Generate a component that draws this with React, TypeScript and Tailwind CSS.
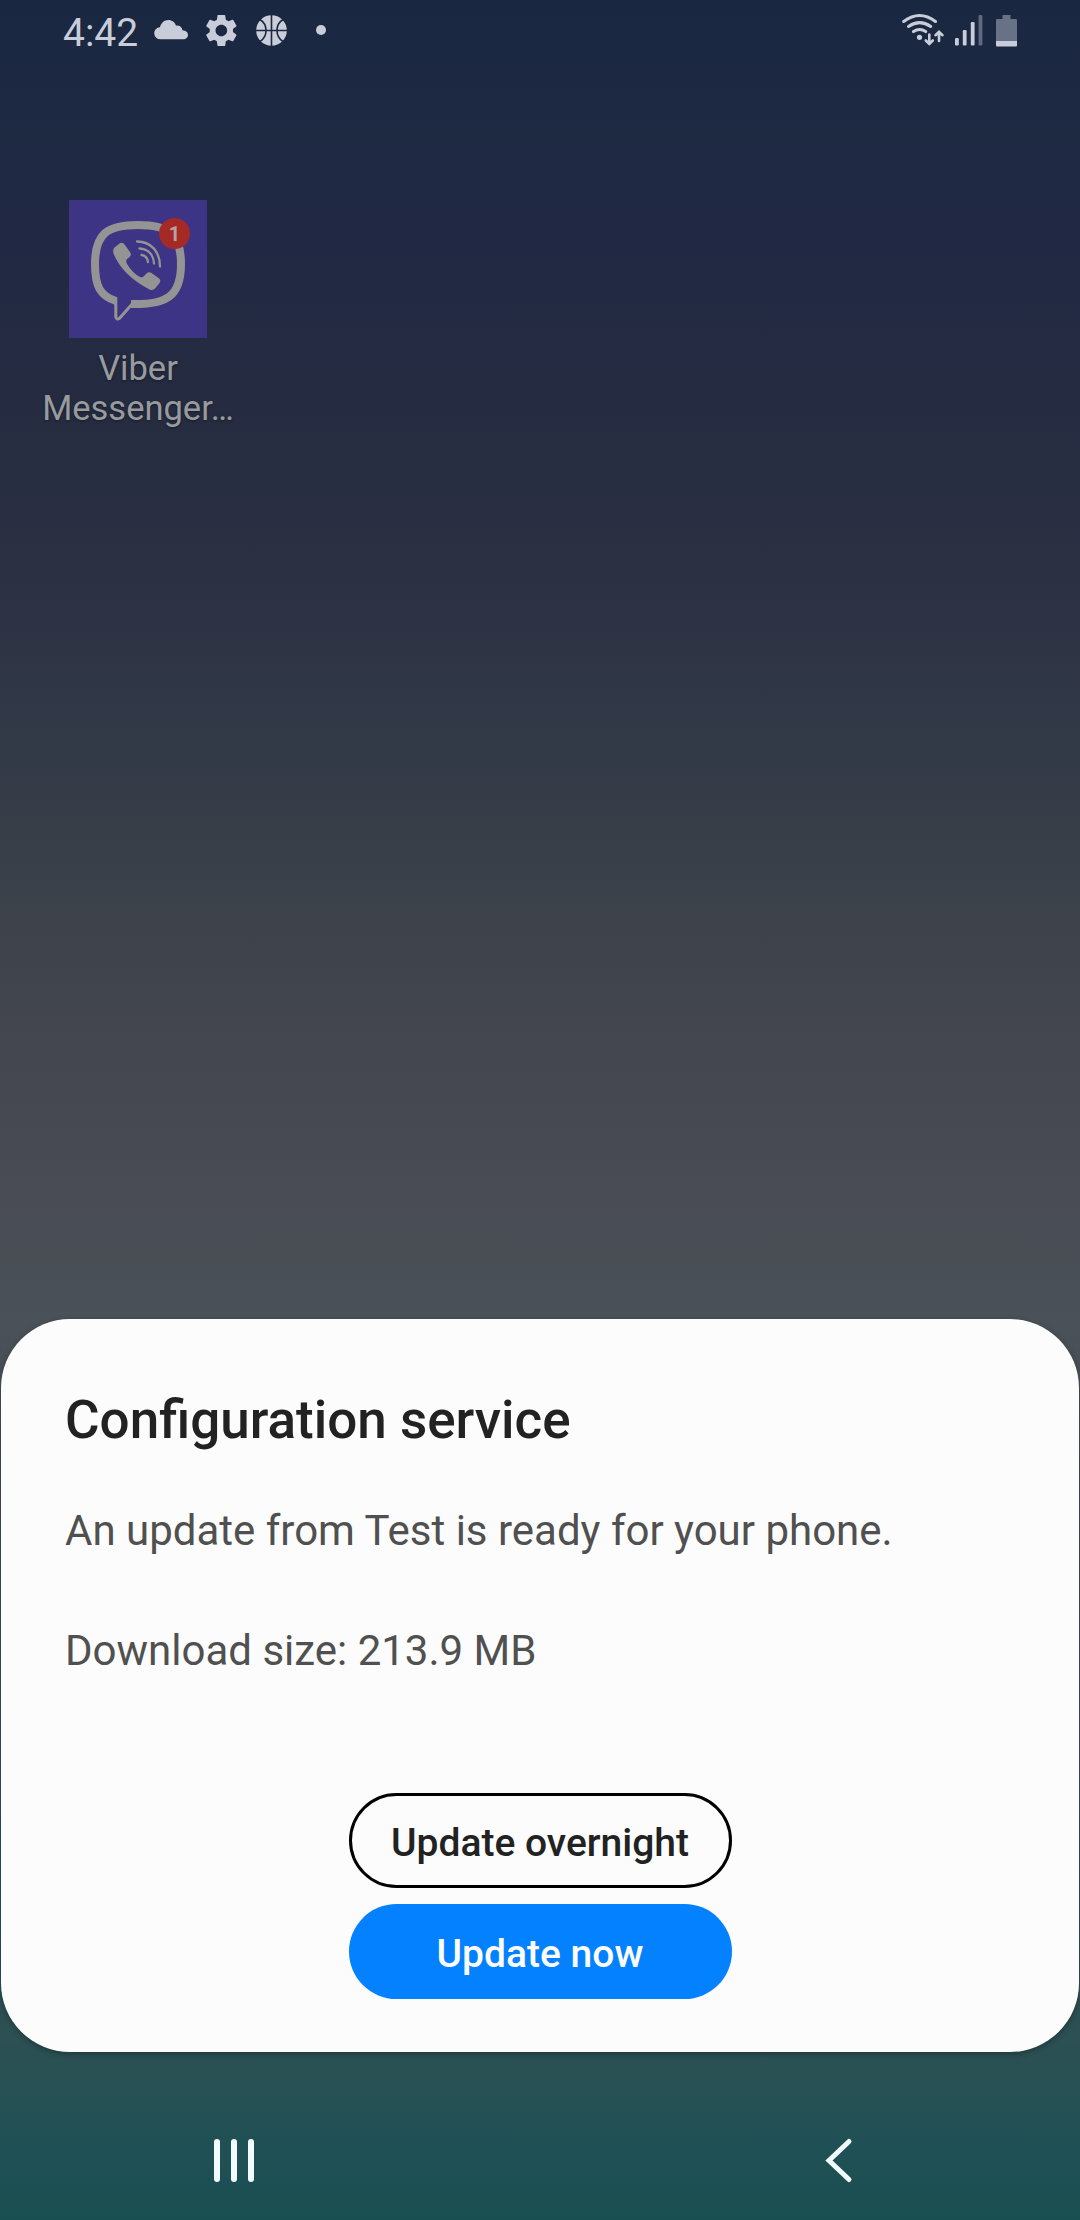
import React from "react";

function StatusBar() {
  return (
    <header className="flex h-16 items-start justify-between text-[#c8cdd9]">
      <div className="flex items-start pl-[63px]">
        <span className="mt-[9px] w-[91px] text-[39px] leading-[48px]">4:42</span>
        <svg className="mt-[20px] h-[20px] w-[34px]" viewBox="0 0 34 20" fill="currentColor">
          <path d="M6.5 19.2a6 6 0 0 1-.6-12C7.2 2.800 10.300 0 14.300 0c3.700 0 6.500 2.200 7.800 5.700 3.100-.5 6 1.300 6.400 4.500 3.100.2 5.500 2 5.500 4.700 0 2.500-2 4.300-4.700 4.300Z" />
        </svg>
        <svg className="mt-[11px] h-[39px] w-[68px]" viewBox="0 0 42 24" fill="currentColor">
          <path transform="translate(8.600 0)" d="M19.14 12.94c.04-.3.06-.61.06-.94 0-.32-.02-.64-.07-.94l2.03-1.58a.49.49 0 0 0 .12-.61l-1.920-3.320a.488.488 0 0 0-.59-.22l-2.390.96c-.5-.38-1.030-.7-1.620-.94l-.36-2.540a.484.484 0 0 0-.48-.41h-3.840c-.24 0-.43.17-.47.41l-.36 2.540c-.59.24-1.130.57-1.620.94l-2.390-.96c-.22-.08-.47 0-.59.22L2.740 8.870c-.12.21-.08.47.12.61l2.030 1.580c-.05.3-.09.63-.09.94s.02.64.07.94l-2.030 1.580a.49.49 0 0 0-.12.61l1.920 3.320c.12.22.37.29.59.22l2.390-.96c.5.38 1.030.7 1.620.94l.36 2.540c.05.24.24.41.48.41h3.840c.24 0 .44-.17.47-.41l.36-2.540c.59-.24 1.130-.56 1.620-.94l2.390.96c.22.08.47 0 .59-.22l1.920-3.320c.12-.22.07-.47-.12-.61l-2.010-1.580zM12 15.600c-1.980 0-3.600-1.620-3.600-3.600s1.620-3.600 3.600-3.600 3.600 1.620 3.600 3.600-1.620 3.600-3.600 3.600z" />
        </svg>
        <svg className="mt-[15px] h-[31px] w-[31px]" viewBox="0 0 31 31">
          <circle cx="15.500" cy="15.500" r="15.300" fill="currentColor" />
          <path d="M15.500 0v31M0 15.500h31M4 4.500c8 5 8 17 0 22M27 4.500c-8 5-8 17 0 22" fill="none" stroke="#1b2840" strokeWidth="1.600" />
        </svg>
        <span className="mt-[25px] ml-[29px] size-[10px] rounded-full bg-current" />
      </div>
      <svg className="mt-[12px] mr-[60px] h-[36px] w-[120px]" viewBox="900 12 120 36">
        <g fill="none" stroke="currentColor" strokeWidth="3" strokeLinecap="round">
          <path d="M903.700 21.500Q919.600 9.500 935.500 21.500M908.500 26.500Q919.600 18.700 930.700 26.500M913.500 31.600Q919.600 27.600 925.700 31.600" />
          <path d="M929.300 34.500v9M925.800 40.500l3.500 3.400 3.500-3.400M939 41v-8.500M935.500 35.200l3.500-3.400 3.500 3.400" strokeWidth="2.600" />
        </g>
        <circle cx="919.500" cy="37.300" r="2.600" fill="currentColor" />
        <g fill="currentColor">
          <rect x="955" y="38" width="3.800" height="7.500" rx="1.200" />
          <rect x="962.800" y="30" width="3.800" height="15.500" rx="1.200" />
          <rect x="970.800" y="22" width="3.800" height="23.500" rx="1.200" />
          <rect x="978.600" y="15" width="3.800" height="30.500" rx="1" opacity=".4" />
          <path d="M1002.500 15h8v4h5.500q1 0 1 1v21h-21V20q0-1 1-1h5.500z" opacity=".45" />
          <path d="M996 41h21v4.500q0 1-1 1h-19q-1 0-1-1z" />
        </g>
      </svg>
    </header>
  );
}

function ViberShortcut() {
  return (
    <div className="mt-[136px] ml-[18px] flex w-[240px] flex-col items-center">
      <div className="relative size-[138px] bg-[#3e3485]">
        <svg className="size-full" viewBox="0 0 138 138" fill="none">
          <path d="M69 25C39 25 26 33 26 64c0 22 5 32 21 37M62 104C98 105 112 96 112 64c0-31-13-39-43-39" stroke="#949494" strokeWidth="8" />
          <path d="M46.800 97v20q.8 3.500 4 1L64 103" stroke="#949494" strokeWidth="3" strokeLinejoin="round" />
          <path d="M45.500 47.500l5-4q3-2 5 1l5.500 7.500q2 3-.5 5l-2.500 2q-1.500 2 0 5 5.500 9 13 13 2.500 1 4-1l2.500-2.500q2-2 5-.5l7 5q3 2 1 5l-4 5q-2.500 3-6 1.500Q53 75 44.500 53.500q-1-4 1-6z" fill="#949494" />
          <path d="M68 41.500c14 0 23 10 23 25M70.500 48.500c9 .5 14 6.500 14.500 15M72.500 55c4 .5 6 3 6.500 7" stroke="#949494" strokeWidth="2.300" strokeLinecap="round" />
        </svg>
        <span className="absolute top-[18px] left-[90px] flex size-[31px] items-center justify-center rounded-full bg-[#a52a25] text-[20px] leading-none font-bold text-[#b9a3a2]">1</span>
      </div>
      <p className="mt-[10px] text-center text-[34.500px] leading-[40px] text-[#999a9d] [text-shadow:0_1px_3px_rgba(0,0,0,0.4)]">
        Viber
        <br />
        Messenger…
      </p>
    </div>
  );
}

function UpdateSheet() {
  return (
    <section className="mx-px flex h-[733px] flex-col rounded-[69px] bg-[#fcfcfc] px-[64px] pt-[71px] shadow-[0_2px_6px_rgba(0,0,0,0.3)]">
      <h1 className="text-[53px] leading-[60px] font-medium text-[#222222]">Configuration service</h1>
      <p className="mt-[51px] text-[42px] leading-[60px] text-[#505050]">An update from Test is ready for your phone.</p>
      <p className="mt-[60px] text-[42px] leading-[60px] text-[#505050]">Download size: 213.9 MB</p>
      <div className="mt-[112px] flex flex-col items-center gap-4">
        <button className="h-[95px] w-[383px] rounded-full border-3 border-black pt-[4px] text-[39px] leading-[48px] font-medium text-[#222222]">Update overnight</button>
        <button className="h-[95px] w-[383px] rounded-full bg-[#0381fe] pt-[4px] text-[39px] leading-[48px] font-medium text-[#fcfcfc]">Update now</button>
      </div>
    </section>
  );
}

function NavigationBar() {
  return (
    <nav className="mt-[48px] flex h-[120px] items-center justify-between pr-[180px] pl-[174px]">
      <button className="flex size-[120px] items-center justify-center gap-[11.200px]" aria-label="Recents">
        <span className="h-[43px] w-[6px] rounded-full bg-[#f2fbfd]" />
        <span className="h-[43px] w-[6px] rounded-full bg-[#f2fbfd]" />
        <span className="h-[43px] w-[6px] rounded-full bg-[#f2fbfd]" />
      </button>
      <button className="flex size-[120px] items-center justify-center" aria-label="Back">
        <svg className="size-[60px]" viewBox="810 2130 60 60" fill="none">
          <path d="M849 2141.500L829 2160.500L849 2179.500" stroke="#f2fbfd" strokeWidth="5" strokeLinecap="round" />
        </svg>
      </button>
    </nav>
  );
}

export default function App() {
  return (
    <main className="flex h-[2220px] w-[1080px] flex-col overflow-hidden bg-[linear-gradient(180deg,#1a2740_0px,#1d2942_110px,#212843_240px,#252c41_400px,#2a2f42_540px,#303746_700px,#373e48_830px,#3e434b_930px,#44474f_1060px,#494c54_1200px,#4a5158_1319px,#434f56_1600px,#2c5053_2040px,#265154_2100px,#1f5055_2150px,#1a4f51_2220px)] font-['Roboto',sans-serif]">
      <StatusBar />
      <ViberShortcut />
      <div className="flex-1" />
      <UpdateSheet />
      <NavigationBar />
    </main>
  );
}
